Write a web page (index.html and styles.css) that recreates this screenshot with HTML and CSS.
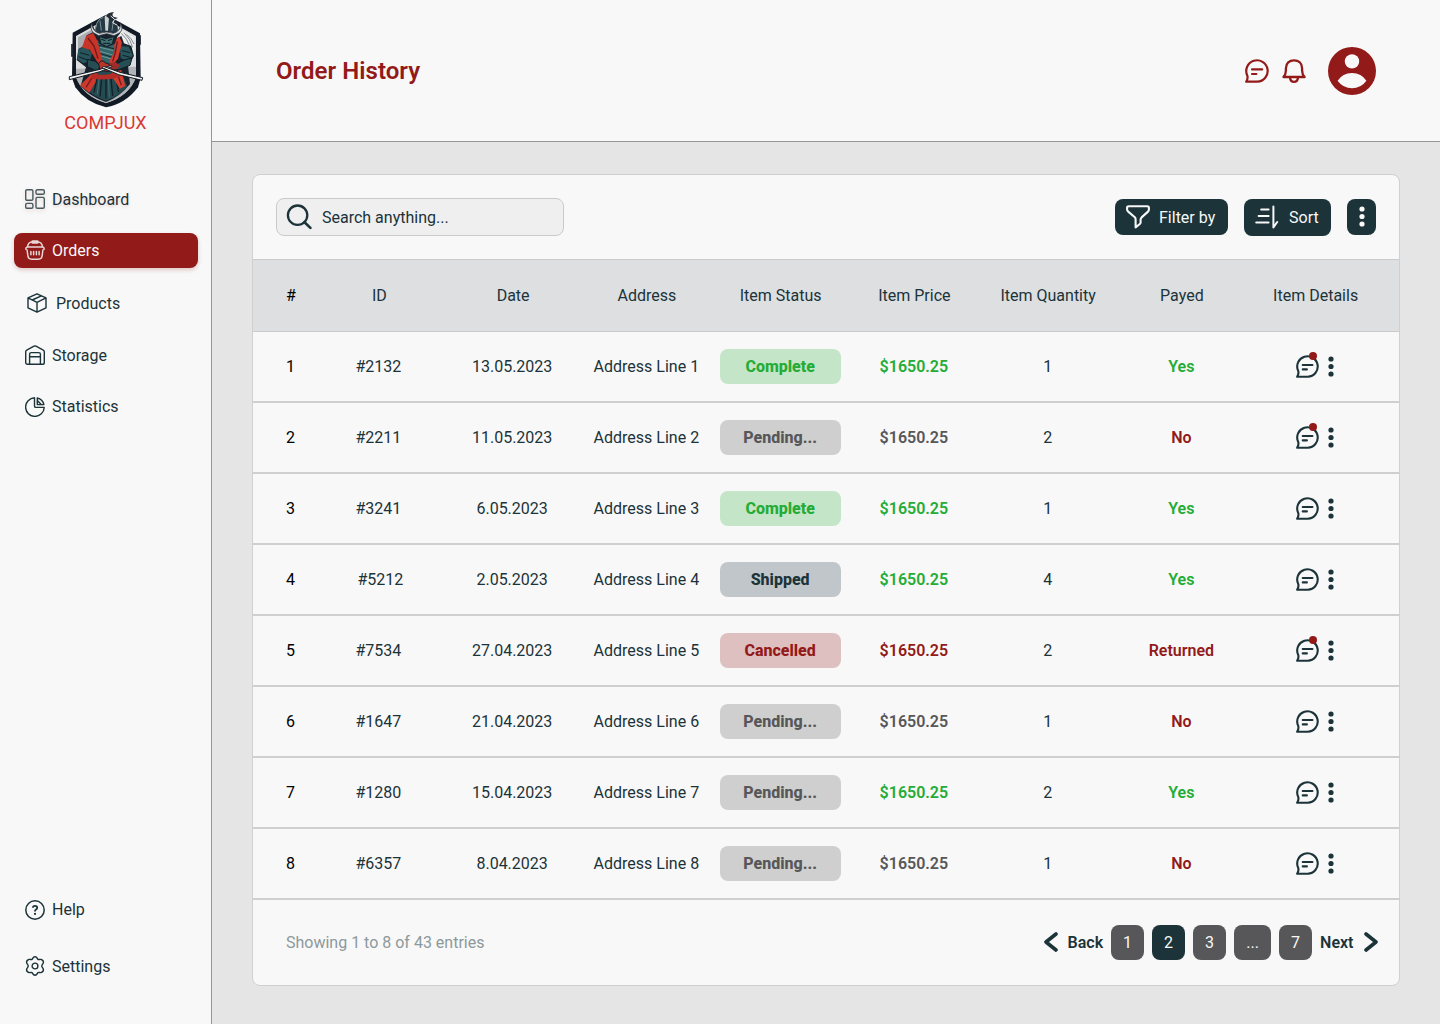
FILE: index.html
```html
<!DOCTYPE html>
<html lang="en">
<head>
<meta charset="utf-8">
<title>Order History</title>
<link rel="stylesheet" href="styles.css">
</head>
<body>
<svg class="sprite" width="0" height="0" aria-hidden="true">
  <symbol id="chat" viewBox="0 0 24 24">
    <path d="M1.2 22.7 H12.3 A10.7 10.7 0 1 0 2.3 16.6 Q3.2 19.4 1.2 22.7 Z" fill="none" stroke="currentColor" stroke-width="2.2" stroke-linejoin="round"/>
    <path d="M7 10.4 H17.2 M7 15 H11.4" fill="none" stroke="currentColor" stroke-width="2.1" stroke-linecap="round"/>
  </symbol>
  <symbol id="dots" viewBox="0 0 6 21">
    <circle cx="3" cy="3" r="2.6"/><circle cx="3" cy="10.5" r="2.6"/><circle cx="3" cy="18" r="2.6"/>
  </symbol>
</svg>
<div class="app">
  <aside class="sidebar">
    <div class="brand">
      <svg class="brand-mark" viewBox="0 0 330 330" aria-hidden="true">
        <path d="M168 44 L270 100 L272 234 L264 262 Q226 312 168 322 Q108 308 76 262 L66 234 L68 98 Z" fill="#121a26"/>
        <path d="M168 58 L258 108 V232 Q236 290 168 309 Q100 290 78 232 V108 Z" fill="#dcdddf"/>
        <path d="M84 112 L130 86 V140 L84 160 Z" fill="#a9adb1"/>
        <path d="M196 80 L254 111 V176 L212 120 Z" fill="#eceded"/>
        <path d="M78 206 L258 200 V232 Q236 290 168 309 Q100 290 78 232 Z" fill="#b1b4b7"/>
        <path d="M214 100 Q232 116 240 140 M222 98 Q242 118 248 142 M230 103 Q246 116 252 132" fill="none" stroke="#27303a" stroke-width="1.6"/>
        <path d="M110 106 L134 94 L150 120 L190 120 L214 108 L222 130 L244 138 L252 168 L234 196 L240 252 Q210 290 168 306 Q120 290 92 258 L108 202 L80 180 L86 146 L106 136 Z" fill="#17222c"/>
        <path d="M84 150 L104 138 L126 158 L120 184 L100 190 L82 178 Z" fill="#28545b"/>
        <path d="M210 138 L236 140 L248 166 L236 186 L212 174 Z" fill="#28545b"/>
        <path d="M90 158 L118 166 M86 170 L112 180 M216 152 L240 158 M218 166 L242 172" stroke="#10202a" stroke-width="3"/>
        <path d="M138 120 H200 L196 170 L178 192 L150 184 Z" fill="#31666a"/>
        <path d="M150 142 L190 152 M150 154 L188 165 M154 168 L184 177" stroke="#8fb0ae" stroke-width="2"/>
        <path d="M146 136 L192 146 M148 160 L188 172" stroke="#152831" stroke-width="3"/>
        <path d="M108 108 L130 98 L142 122 L158 184 L148 196 L120 150 L96 142 Z" fill="#c93429"/>
        <path d="M192 122 L208 110 L216 128 L204 176 L186 196 L178 184 L194 152 Z" fill="#d43a2d"/>
        <path d="M114 114 L132 138 L144 176 M202 124 L196 158 L188 184" fill="none" stroke="#6d1a1c" stroke-width="4"/>
        <path d="M124 214 L212 212 L232 260 Q206 288 168 302 Q126 288 104 262 Z" fill="#244b52"/>
        <path d="M142 228 L132 278 M156 226 L150 290 M168 224 V296 M182 226 L188 288 M196 226 L206 276" stroke="#122028" stroke-width="4"/>
        <path d="M148 230 L142 282 M175 226 L178 292" stroke="#548086" stroke-width="2"/>
        <path d="M124 222 L142 216 L136 248 L118 278 L90 256 Z" fill="#cf382c"/>
        <path d="M186 216 L214 210 L226 258 L210 266 L190 236 Z" fill="#d63c2e"/>
        <path d="M128 230 L108 262 M204 226 L214 256" stroke="#771c1d" stroke-width="4"/>
        <path d="M126 220 Q160 232 210 212 L216 228 Q166 246 122 234 Z" fill="#b62d27"/>
        <path d="M112 178 L136 184 L154 200 L138 212 L112 200 Z M246 174 L222 180 L188 198 L204 210 L240 196 Z" fill="#254e55" stroke="#101a23" stroke-width="3"/>
        <path d="M146 190 Q154 176 166 188 L180 194 L178 214 L150 212 Z" fill="#b93429" stroke="#171b24" stroke-width="3"/>
        <path d="M178 190 L196 186 L210 196 L200 208 L180 208 Z" fill="#9e2d29"/>
        <path d="M58 230 L150 208 L184 196 L186 200 L150 215 L58 239 Z" fill="#f3f3f2" stroke="#111923" stroke-width="3"/>
        <path d="M278 233 L210 217 L160 199 L156 203 L206 224 L276 241 Z" fill="#f3f3f2" stroke="#111923" stroke-width="3"/>
        <path d="M128 66 Q128 90 146 98 L192 98 Q210 92 214 72 Q218 96 202 110 L194 132 L170 142 L148 132 L138 110 Q124 98 128 66 Z" fill="#18232d"/>
        <path d="M136 90 Q136 54 170 48 Q204 56 204 90 L192 102 L148 102 Z" fill="#253944"/>
        <path d="M126 68 Q124 92 148 100 Q170 92 190 100 Q216 92 210 68 Q222 86 210 98 L192 107 L170 101 L146 107 L130 98 Q118 86 126 68 Z" fill="#d8dadd" stroke="#19232e" stroke-width="2"/>
        <path d="M164 50 L170 42 L177 52 L174 92 H166 Z" fill="#cbd0d3"/>
        <path d="M150 62 L154 92 M190 62 L186 92 M160 52 Q140 58 138 82" fill="none" stroke="#7a8d94" stroke-width="3"/>
        <path d="M168 48 Q172 38 192 36 Q184 44 190 50 L204 54 L194 58 L206 70 L196 82 L192 64 L180 58 Z" fill="#222b35"/>
        <path d="M182 48 L194 58 L188 68 L202 76" fill="none" stroke="#f1f1f1" stroke-width="3"/>
        <path d="M150 112 L168 118 L190 112 L186 130 L170 138 L154 130 Z" fill="#3f7072"/>
        <path d="M154 118 L166 122 M174 122 L186 117 M160 130 H180" stroke="#0e1821" stroke-width="3"/>
        <path d="M66 132 V170 M72 178 V218 M270 106 V134 M266 154 V182" stroke="#121a26" stroke-width="5"/>
      </svg>
      <div class="brand-name">COMPJUX</div>
    </div>
    <nav class="nav">
      <a class="nav-item dashboard">
        <svg viewBox="0 0 20 20"><g fill="none" stroke="currentColor" stroke-width="1.4"><rect x=".7" y=".7" width="7.2" height="10.6" rx="1.4"/><rect x="11" y=".7" width="8.3" height="4.6" rx="1.4"/><rect x="11" y="8.4" width="8.3" height="10.9" rx="1.4"/><rect x=".7" y="14.4" width="7.2" height="4.9" rx="1.4"/></g></svg>
        <span>Dashboard</span></a>
      <a class="nav-item orders active">
        <svg viewBox="0 0 20 20"><g fill="none" stroke="currentColor" stroke-width="1.5" stroke-linecap="round"><path d="M.9 9.2 Q.7 6.9 3 6.9 H17 Q19.3 6.9 19.1 9.2 M2.1 10 L2.9 16 Q3.4 19.2 6.6 19.2 H13.4 Q16.6 19.2 17.1 16 L17.9 10 M2.6 6.4 Q3.2 2.4 6.8 2 M17.4 6.4 Q16.8 2.4 13.2 2"/><path d="M5.9 11.4 V14.8 M8.6 11.4 V14.8 M11.4 11.4 V14.8 M14.1 11.4 V14.8"/></g><rect x="6.4" y=".3" width="7.2" height="3.4" rx="1.3" fill="currentColor"/></svg>
        <span>Orders</span></a>
      <a class="nav-item products">
        <svg viewBox="0 0 20 20"><path d="M10 .8 L19 4.9 V14.8 L10 19.2 L1 14.8 V4.9 Z M1 4.9 L10 9.3 L19 4.9 M10 9.3 V19.2 M5.2 7 L14.4 2.8" fill="none" stroke="currentColor" stroke-width="1.4" stroke-linejoin="round"/></svg>
        <span>Products</span></a>
      <a class="nav-item storage">
        <svg viewBox="0 0 20 20"><path d="M.7 6.7 Q.7 5.6 1.7 5.1 L9 1.2 Q10 .7 11 1.2 L18.3 5.1 Q19.3 5.6 19.3 6.7 V17.4 Q19.3 19.3 17.4 19.3 H2.6 Q.7 19.3 .7 17.4 Z M4.6 19.3 V9.2 Q4.6 7.6 6.2 7.6 H13.8 Q15.4 7.6 15.4 9.2 V19.3 M4.6 11.7 H15.4" fill="none" stroke="currentColor" stroke-width="1.4"/></svg>
        <span>Storage</span></a>
      <a class="nav-item statistics">
        <svg viewBox="0 0 20 20"><path d="M9.5 .8 A9.3 9.3 0 1 0 19.2 10.4 H11 Q9.5 10.4 9.5 8.9 Z M12.3 1 V7.6 H18.9 A8.8 8.8 0 0 0 12.3 1 Z M12.6 3.8 L16 7.2" fill="none" stroke="currentColor" stroke-width="1.4" stroke-linejoin="round"/></svg>
        <span>Statistics</span></a>
    </nav>
    <nav class="nav nav-foot">
      <a class="nav-item help">
        <svg viewBox="0 0 20 20"><circle cx="10" cy="10" r="9.2" fill="none" stroke="currentColor" stroke-width="1.5"/><path d="M7.9 7.7 Q8 5.8 10 5.8 Q12.2 5.8 12.2 7.7 Q12.2 8.8 11 9.5 Q10 10.1 10 11.4" fill="none" stroke="currentColor" stroke-width="1.8"/><circle cx="10" cy="13.9" r="1.1" fill="currentColor"/></svg>
        <span>Help</span></a>
      <a class="nav-item settings">
        <svg viewBox="0 0 20 20"><path d="M10 .8 C12.1 .8 12 2.2 12.8 3.2 C13.6 4 14.8 3.1 16 3.4 C17.6 4 18.7 5.7 18.3 7 C17.9 8.1 16.8 8.8 16.8 10 C16.8 11.2 17.9 11.9 18.3 13 C18.7 14.3 17.6 16 16 16.6 C14.8 16.9 13.6 16 12.8 16.8 C12 17.8 12.1 19.2 10 19.2 C7.9 19.2 8 17.8 7.2 16.8 C6.4 16 5.2 16.9 4 16.6 C2.4 16 1.3 14.3 1.7 13 C2.1 11.9 3.2 11.2 3.2 10 C3.2 8.8 2.1 8.1 1.7 7 C1.3 5.7 2.4 4 4 3.4 C5.2 3.1 6.4 4 7.2 3.2 C8 2.2 7.9 .8 10 .8 Z" fill="none" stroke="currentColor" stroke-width="1.4"/><circle cx="10" cy="10" r="2.9" fill="none" stroke="currentColor" stroke-width="1.4"/></svg>
        <span>Settings</span></a>
    </nav>
  </aside>

  <div class="main">
    <header class="topbar">
      <h1>Order History</h1>
      <div class="top-actions">
        <svg class="top-icon"><use href="#chat"/></svg>
        <svg class="top-icon bell" viewBox="0 0 24 24"><path d="M1.4 18 Q3.9 15.6 3.9 11.6 V9.2 C3.9 4 7.4 1.3 12 1.3 S20.1 4 20.1 9.2 V11.6 Q20.1 15.6 22.6 18 Z" fill="none" stroke="currentColor" stroke-width="2.3" stroke-linejoin="round"/><path d="M8 18.6 Q8.4 22.8 12 22.8 T16 18.6" fill="none" stroke="currentColor" stroke-width="2.3"/></svg>
        <svg class="avatar" viewBox="0 0 48 48"><circle cx="24" cy="24" r="24" fill="currentColor"/><circle cx="24" cy="14.4" r="7.2" fill="#f8f8f8"/><path d="M9.6 33.8 Q14.5 26 24 26 T38.4 33.8 Q33 41.3 24 41.3 T9.6 33.8 Z" fill="#f8f8f8"/></svg>
      </div>
    </header>

    <section class="card">
      <div class="toolbar">
        <div class="search">
          <svg viewBox="0 0 26 26"><circle cx="11.6" cy="11.2" r="9.7" fill="none" stroke="currentColor" stroke-width="2.3"/><path d="M18.5 18.2 L24.4 23.9" stroke="currentColor" stroke-width="2.6" stroke-linecap="round"/></svg>
          <span>Search anything...</span>
        </div>
        <div class="tools">
          <button class="btn filter"><svg width="24" height="24" viewBox="0 0 24 24"><path d="M2.8 1.2 H21.2 Q22.9 1.2 22.9 2.8 V4.4 Q22.9 5.6 22 6.6 L15.6 12.4 Q14.6 13.4 14.6 14.6 V17.4 Q14.6 18.4 13.8 19 L9.6 22.4 V14.4 Q9.6 13.2 8.8 12.2 L2.2 6.6 Q1.1 5.4 1.1 4.4 V2.8 Q1.1 1.2 2.8 1.2 Z" fill="none" stroke="currentColor" stroke-width="2.1" stroke-linejoin="round"/></svg><span>Filter by</span></button>
          <button class="btn sort"><svg width="24" height="24" viewBox="0 0 24 24"><path d="M6.2 4.6 H13.6 M3.6 11 H13.6 M1.2 17.4 H13.6 M18.4 1.4 V22.4 L22.2 17" fill="none" stroke="currentColor" stroke-width="2" stroke-linecap="round" stroke-linejoin="round"/></svg><span>Sort</span></button>
          <button class="btn more"><svg width="6" height="21" fill="currentColor"><use href="#dots"/></svg></button>
        </div>
      </div>

      <table class="orders-table">
        <colgroup><col class="c-num"><col><col><col><col><col><col><col><col><col class="c-end"></colgroup>
        <thead>
          <tr><th class="num">#</th><th>ID</th><th>Date</th><th>Address</th><th>Item Status</th><th>Item Price</th><th>Item Quantity</th><th>Payed</th><th>Item Details</th><th></th></tr>
        </thead>
        <tbody>
          <tr><td class="num">1</td><td class="lead">#2132</td><td class="lead">13.05.2023</td><td>Address Line 1</td><td><span class="status complete">Complete</span></td><td class="b green">$1650.25</td><td>1</td><td class="b green">Yes</td><td><div class="details"><span class="msg unread"><svg><use href="#chat"/></svg></span><svg class="kebab"><use href="#dots"/></svg></div></td><td></td></tr>
          <tr><td class="num">2</td><td class="lead">#2211</td><td class="lead">11.05.2023</td><td>Address Line 2</td><td><span class="status pending">Pending...</span></td><td class="b gray">$1650.25</td><td>2</td><td class="b red">No</td><td><div class="details"><span class="msg unread"><svg><use href="#chat"/></svg></span><svg class="kebab"><use href="#dots"/></svg></div></td><td></td></tr>
          <tr><td class="num">3</td><td class="lead">#3241</td><td class="lead">6.05.2023</td><td>Address Line 3</td><td><span class="status complete">Complete</span></td><td class="b green">$1650.25</td><td>1</td><td class="b green">Yes</td><td><div class="details"><span class="msg"><svg><use href="#chat"/></svg></span><svg class="kebab"><use href="#dots"/></svg></div></td><td></td></tr>
          <tr><td class="num">4</td><td class="shift">#5212</td><td class="lead">2.05.2023</td><td>Address Line 4</td><td><span class="status shipped">Shipped</span></td><td class="b green">$1650.25</td><td>4</td><td class="b green">Yes</td><td><div class="details"><span class="msg"><svg><use href="#chat"/></svg></span><svg class="kebab"><use href="#dots"/></svg></div></td><td></td></tr>
          <tr><td class="num">5</td><td class="lead">#7534</td><td class="lead">27.04.2023</td><td>Address Line 5</td><td><span class="status cancelled">Cancelled</span></td><td class="b red">$1650.25</td><td>2</td><td class="b red">Returned</td><td><div class="details"><span class="msg unread"><svg><use href="#chat"/></svg></span><svg class="kebab"><use href="#dots"/></svg></div></td><td></td></tr>
          <tr><td class="num">6</td><td class="lead">#1647</td><td class="lead">21.04.2023</td><td>Address Line 6</td><td><span class="status pending">Pending...</span></td><td class="b gray">$1650.25</td><td>1</td><td class="b red">No</td><td><div class="details"><span class="msg"><svg><use href="#chat"/></svg></span><svg class="kebab"><use href="#dots"/></svg></div></td><td></td></tr>
          <tr><td class="num">7</td><td class="lead">#1280</td><td class="lead">15.04.2023</td><td>Address Line 7</td><td><span class="status pending">Pending...</span></td><td class="b green">$1650.25</td><td>2</td><td class="b green">Yes</td><td><div class="details"><span class="msg"><svg><use href="#chat"/></svg></span><svg class="kebab"><use href="#dots"/></svg></div></td><td></td></tr>
          <tr><td class="num">8</td><td class="lead">#6357</td><td class="lead">8.04.2023</td><td>Address Line 8</td><td><span class="status pending">Pending...</span></td><td class="b gray">$1650.25</td><td>1</td><td class="b red">No</td><td><div class="details"><span class="msg"><svg><use href="#chat"/></svg></span><svg class="kebab"><use href="#dots"/></svg></div></td><td></td></tr>
        </tbody>
      </table>

      <footer class="card-foot">
        <span class="showing">Showing 1 to 8 of 43 entries</span>
        <div class="pager">
          <a class="step back"><svg viewBox="0 0 16 20"><path d="M13 2 L3 10 L13 18" fill="none" stroke="currentColor" stroke-width="3.6" stroke-linecap="round" stroke-linejoin="round"/></svg><span>Back</span></a>
          <a class="page">1</a><a class="page current">2</a><a class="page">3</a><a class="page gap">...</a><a class="page">7</a>
          <a class="step next"><span>Next</span><svg viewBox="0 0 16 20"><path d="M3 2 L13 10 L3 18" fill="none" stroke="currentColor" stroke-width="3.6" stroke-linecap="round" stroke-linejoin="round"/></svg></a>
        </div>
      </footer>
    </section>
  </div>
</div>
</body>
</html>
```
FILE: styles.css
```css
* { box-sizing: border-box; }
body {
  margin: 0;
  background: #e5e5e5;
  color: #1b3339;
  font: 400 16px/19px Roboto, sans-serif;
}
svg { display: block; flex: none; }
.sprite { display: none; }
.app { display: flex; width: 1440px; height: 1024px; }

.sidebar {
  display: flex;
  flex-direction: column;
  width: 212px;
  background: #f8f8f8;
  border-right: 1px solid #949698;
}
.brand { display: flex; flex-direction: column; align-items: center; height: 182px; }
.brand-mark { width: 110px; height: 110px; margin-right: 1px; }
.brand-name { margin-top: 2px; font-size: 18px; line-height: 21px; color: #d93a30; }
.nav { display: flex; flex-direction: column; padding: 0 13px 0 14px; }
.nav-item {
  display: flex;
  align-items: center;
  gap: 7px;
  height: 35px;
  padding-left: 11px;
  border-radius: 8px;
}
.nav-item svg { width: 20px; height: 20px; margin-bottom: 1px; }
.dashboard { text-shadow: 0 2px 3px rgba(145, 24, 24, .15); }
.dashboard svg { opacity: .8; filter: drop-shadow(0 2px 2px rgba(145, 24, 24, .2)); }
.orders { margin-top: 16px; }
.orders svg { opacity: .85; }
.active { background: #921a19; color: #f8f8f8; box-shadow: 0 2px 4px rgba(145, 24, 24, .22); }
.products { margin-top: 18px; padding-left: 13px; gap: 9px; }
.storage { margin-top: 17px; }
.statistics { margin-top: 16px; }
.nav-item.statistics svg, .nav-item.help svg { margin-bottom: 0; }
.nav-foot { margin-top: auto; padding-bottom: 40px; }
.settings { margin-top: 22px; }

.main { display: flex; flex-direction: column; flex: 1; }
.topbar {
  display: flex;
  align-items: center;
  justify-content: space-between;
  height: 142px;
  padding: 0 64px;
  background: #f8f8f8;
  border-bottom: 1px solid #949698;
  color: #921a19;
}
h1 { margin: 0; font-size: 24px; line-height: 28px; font-weight: 600; letter-spacing: .04px; }
.top-actions { display: flex; align-items: center; }
.top-icon { width: 24px; height: 24px; }
.bell { margin-left: 13px; }
.avatar { width: 48px; height: 48px; margin-left: 22.4px; }

.card {
  width: 1148px;
  height: 812px;
  margin: 32px 0 0 40px;
  background: #f8f8f8;
  border: 1px solid #cfd0d1;
  border-radius: 8px;
}
.toolbar {
  display: flex;
  align-items: center;
  justify-content: space-between;
  height: 84px;
  padding: 0 23px;
}
.search {
  display: flex;
  align-items: center;
  gap: 10px;
  width: 288px;
  height: 38px;
  padding-left: 9px;
  background: #efefef;
  border: 1px solid #cacaca;
  border-radius: 8px;
}
.search svg { width: 26px; height: 26px; }
.tools { display: flex; align-items: center; }
.btn {
  display: flex;
  align-items: center;
  height: 36px;
  padding: 0;
  border: 0;
  border-radius: 8px;
  background: #1b3339;
  color: #f8f8f8;
  font: inherit;
}
.filter { width: 113px; padding-left: 10px; gap: 10px; }
.filter svg { margin: 0 -1px 0 1px; }
.sort { width: 87px; height: 37px; margin: 0 16px; padding-left: 11px; gap: 10px; }
.more { width: 29px; justify-content: center; }
.more svg { margin-bottom: 1px; }

.orders-table { width: 1146px; table-layout: fixed; border-collapse: separate; border-spacing: 0; }
.c-num { width: 59px; }
.c-end { width: 17px; }
th {
  height: 73px;
  padding: 0 0 0 1px;
  background: #dddfe1;
  border: solid #c9cbcc;
  border-width: 1px 0;
  font-weight: 400;
}
td { height: 71px; padding: 0; border-bottom: 2px solid #cfcfcf; text-align: center; }
th.num { padding-left: 17px; color: #000; }
td.num { padding-left: 16px; color: #000; }
.lead { padding-right: 1px; }
.shift { padding-left: 3px; }
.b { font-weight: 600; }
.green { color: #24ac36; }
.gray { color: #575759; }
.red { color: #921a19; }
.status {
  display: flex;
  align-items: center;
  justify-content: center;
  width: 121px;
  height: 35px;
  margin: 0 auto;
  border-radius: 8px;
  font-weight: 800;
}
.complete { background: #c4e5c7; color: #24ac36; }
.pending { background: #cfcfcf; color: #575759; }
.shipped { background: #c0c6c9; color: #1b3339; }
.cancelled { background: #dfc0c0; color: #921a19; }
.details { display: flex; align-items: center; justify-content: center; gap: 9.5px; }
.msg { position: relative; }
.msg svg { width: 23px; height: 23px; }
.unread::after {
  content: "";
  position: absolute;
  top: -3px;
  right: 2px;
  width: 8px;
  height: 8px;
  border-radius: 50%;
  background: #921a19;
}
.kebab { width: 6px; height: 21px; fill: currentColor; }

.card-foot {
  display: flex;
  align-items: center;
  justify-content: space-between;
  height: 85px;
  padding: 0 20px 0 33px;
}
.showing { color: #8d999c; }
.pager { display: flex; align-items: center; gap: 8px; }
.page {
  display: flex;
  align-items: center;
  justify-content: center;
  width: 33px;
  height: 35px;
  border-radius: 8px;
  background: #575759;
  color: #f8f8f8;
}
.gap { width: 37px; }
.current { background: #1b3339; }
.step { display: flex; align-items: center; gap: 9px; font-weight: 600; }
.next { gap: 9.5px; }
.step svg { width: 16px; height: 20px; margin-bottom: 1px; }
```
